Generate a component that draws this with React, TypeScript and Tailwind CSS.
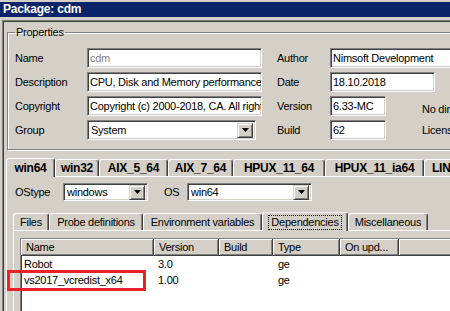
const sunken =
  "border border-t-[#808080] border-l-[#808080] border-r-white border-b-white shadow-[inset_1px_1px_0_#404040,inset_-1px_-1px_0_#d4d0c8]";
const raised =
  "border border-t-[#d4d0c8] border-l-[#d4d0c8] border-r-[#404040] border-b-[#404040] shadow-[inset_1px_1px_0_#fff,inset_-1px_-1px_0_#808080]";

function Field({ className, value, gray }: { className: string; value: string; gray?: boolean }) {
  return (
    <div
      className={`${sunken} ${className} bg-white h-[20px] flex items-center pl-[2px] whitespace-nowrap overflow-hidden ${
        gray ? "text-[#808080]" : "text-black"
      }`}
    >
      {value}
    </div>
  );
}

function Select({ className, value, h = "h-[20px]" }: { className: string; value: string; h?: string }) {
  return (
    <div className={`${sunken} ${className} ${h} bg-white flex items-center pl-[3px] pr-[2px]`}>
      <span className="flex-1 truncate">{value}</span>
      <span className={`${raised} w-[16px] h-[15px] flex items-center justify-center bg-[#d4d0c8]`}>
        <svg width="7" height="4" viewBox="0 0 7 4">
          <path d="M0 0h7L3.5 4z" fill="#000" />
        </svg>
      </span>
    </div>
  );
}

function Tab({ label, w, active, bold }: { label: string; w: string; active?: boolean; bold?: boolean }) {
  return (
    <div
      className={`${w} shrink-0 flex items-center justify-center whitespace-nowrap overflow-hidden border-l border-t border-r border-l-white border-t-white border-r-[#404040] rounded-t-[3px] shadow-[inset_-1px_0_0_#808080] bg-[#d4d0c8] ${
        active ? "h-[19px] -mb-px relative z-10" : "h-[17px]"
      } ${bold ? "font-bold text-[12px]" : ""}`}
    >
      {active && !bold ? (
        <span className="border border-dotted border-black px-[2px] leading-[13px]">{label}</span>
      ) : (
        label
      )}
    </div>
  );
}

const columns = [
  { name: "Name", w: "w-[133px]" },
  { name: "Version", w: "w-[65px]" },
  { name: "Build", w: "w-[54px]" },
  { name: "Type", w: "w-[67px]" },
  { name: "On upd...", w: "w-[59px]" },
  { name: "", w: "w-[120px]" },
];

const deps = [
  { name: "Robot", version: "3.0", build: "", type: "ge" },
  { name: "vs2017_vcredist_x64", version: "1.00", build: "", type: "ge" },
];

export default function App() {
  return (
    <div className="relative w-[450px] h-[311px] overflow-hidden bg-[#d4d0c8] font-['Liberation_Sans',Arial,sans-serif] text-[11px] tracking-[-0.25px] text-black">
      {/* title bar */}
      <div className="h-[20px] pt-[2px]">
        <div className="h-[15px] bg-[#0a246a] text-white font-bold text-[12px] leading-[15px] pl-[3px] tracking-[-0.2px]">
          Package: cdm
        </div>
      </div>

      {/* client area */}
      <div className="ml-[2px] w-[470px] h-[300px] border-t border-l border-[#808080] shadow-[inset_1px_1px_0_#404040]">
        <fieldset className="mt-[4px] ml-[4px] w-[470px] border border-[#808080] shadow-[inset_1px_1px_0_#fff,1px_1px_0_#fff] pl-[7px] pt-[9px] pb-[9px]">
          <legend className="px-[1px] leading-[14px]">Properties</legend>
          <div className="flex flex-col gap-[4px]">
            <div className="flex items-center h-[20px]">
              <span className="w-[72px]">Name</span>
              <Field className="w-[175px]" value="cdm" gray />
              <span className="ml-[15px] w-[53px]">Author</span>
              <Field className="w-[130px]" value="Nimsoft Development" />
            </div>
            <div className="flex items-center h-[20px]">
              <span className="w-[72px]">Description</span>
              <Field className="w-[175px]" value="CPU, Disk and Memory performance" />
              <span className="ml-[15px] w-[53px]">Date</span>
              <Field className="w-[105px]" value="18.10.2018" />
            </div>
            <div className="flex items-center h-[20px]">
              <span className="w-[72px]">Copyright</span>
              <Field className="w-[175px]" value="Copyright (c) 2000-2018, CA. All rights reserved." />
              <span className="ml-[15px] w-[53px]">Version</span>
              <Field className="w-[56px]" value="6.33-MC" />
              <span className="ml-[36px] mt-[7px] whitespace-nowrap">No direct update</span>
            </div>
            <div className="flex items-center h-[20px]">
              <span className="w-[72px]">Group</span>
              <Select className="w-[169px]" value="System" />
              <span className="ml-[21px] w-[53px]">Build</span>
              <Field className="w-[56px]" value="62" />
              <span className="ml-[36px] whitespace-nowrap">License</span>
            </div>
          </div>
        </fieldset>

        {/* platform tabs */}
        <div className="ml-[3px] mt-[7px]">
          <div className="flex items-end h-[19px]">
            <Tab label="win64" w="w-[49px]" active bold />
            <Tab label="win32" w="w-[44px]" bold />
            <Tab label="AIX_5_64" w="w-[69px]" bold />
            <Tab label="AIX_7_64" w="w-[65px]" bold />
            <Tab label="HPUX_11_64" w="w-[92px]" bold />
            <Tab label="HPUX_11_ia64" w="w-[99px]" bold />
            <Tab label="LINUX_23" w="w-[70px]" bold />
          </div>
          <div className="border-t border-l border-white h-[140px]">
            <div className="flex items-center h-[18px] mt-[6px] ml-[8px]">
              <span className="w-[48px]">OStype</span>
              <Select className="w-[85px]" value="windows" h="h-[18px]" />
              <span className="ml-[16px] w-[23px]">OS</span>
              <Select className="w-[125px]" value="win64" h="h-[18px]" />
            </div>

            {/* section tabs */}
            <div className="ml-[6px] mt-[10px]">
              <div className="flex items-end h-[19px]">
                <Tab label="Files" w="w-[36px]" />
                <Tab label="Probe definitions" w="w-[94px]" />
                <Tab label="Environment variables" w="w-[119px]" />
                <Tab label="Dependencies" w="w-[86px]" active />
                <Tab label="Miscellaneous" w="w-[80px]" />
              </div>
              <div className="border-t border-l border-white h-[100px]">
                <div className={`${sunken} ml-[6px] mt-[7px] w-[470px] h-[90px] bg-white`}>
                  <div className="flex h-[17px]">
                    {columns.map((c, i) => (
                      <div
                        key={i}
                        className={`${c.w} shrink-0 bg-[#d4d0c8] border-r border-b border-r-[#404040] border-b-[#404040] shadow-[inset_1px_1px_0_#fff,inset_-1px_-1px_0_#808080] pl-[5px] leading-[16px] whitespace-nowrap`}
                      >
                        {c.name}
                      </div>
                    ))}
                  </div>
                  {deps.map((d) => (
                    <div key={d.name} className="flex h-[16px] items-center">
                      <span className="w-[133px] pl-[3px]">{d.name}</span>
                      <span className="w-[65px] pl-[4px]">{d.version}</span>
                      <span className="w-[54px] pl-[4px]">{d.build}</span>
                      <span className="w-[67px] pl-[5px]">{d.type}</span>
                    </div>
                  ))}
                </div>
              </div>
            </div>
          </div>
        </div>
      </div>

      {/* annotation */}
      <div className="absolute left-[7px] top-[270px] w-[139px] h-[21px] border-[3px] border-[#e8212b]" />
    </div>
  );
}
